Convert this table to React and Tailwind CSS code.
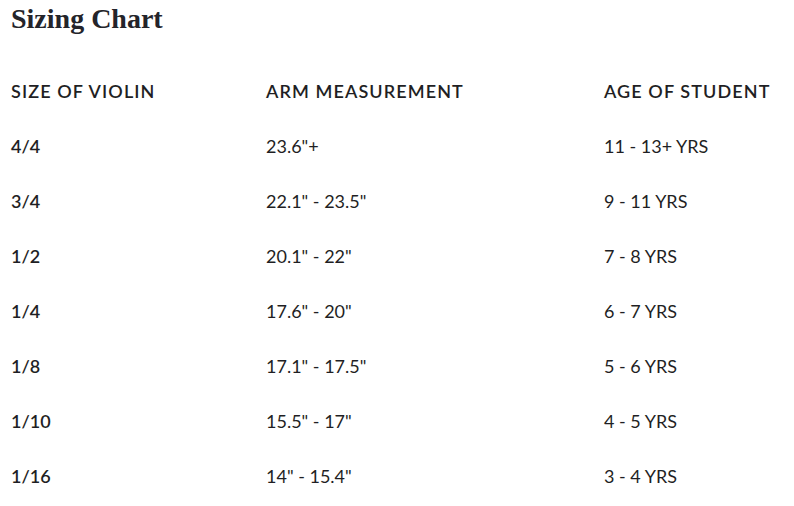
import React from 'react';

const rows = [
    { size: '4/4', arm: '23.6"+', age: '11 - 13+ YRS' },
    { size: '3/4', arm: '22.1" - 23.5"', age: '9 - 11 YRS' },
    { size: '1/2', arm: '20.1" - 22"', age: '7 - 8 YRS' },
    { size: '1/4', arm: '17.6" - 20"', age: '6 - 7 YRS' },
    { size: '1/8', arm: '17.1" - 17.5"', age: '5 - 6 YRS' },
    { size: '1/10', arm: '15.5" - 17"', age: '4 - 5 YRS' },
    { size: '1/16', arm: '14" - 15.4"', age: '3 - 4 YRS' },
];

const App = () => {
    return (
        <div className="bg-white w-[794px] h-[506px] overflow-hidden pl-[11px] text-[#1f1f24]">
            <h1 className="font-['Liberation_Serif',serif] text-[28px] leading-[38px] font-bold text-[#24242a] h-[64px]">
                Sizing Chart
            </h1>

            <table className="font-['Lato',sans-serif] text-[18px] leading-[27px] border-collapse">
                <thead>
                    <tr>
                        <th className="w-[255px] text-left font-semibold tracking-[1.1px] py-[14px] px-0">SIZE OF VIOLIN</th>
                        <th className="w-[338px] text-left font-semibold tracking-[1.1px] py-[14px] px-0">ARM MEASUREMENT</th>
                        <th className="text-left font-semibold tracking-[1.1px] py-[14px] px-0">AGE OF STUDENT</th>
                    </tr>
                </thead>
                <tbody>
                    {rows.map((r) => (
                        <tr key={r.size}>
                            <td className="font-semibold py-[14px] px-0">{r.size}</td>
                            <td className="py-[14px] px-0">{r.arm}</td>
                            <td className="py-[14px] px-0">{r.age}</td>
                        </tr>
                    ))}
                </tbody>
            </table>
        </div>
    );
};

export default App;
